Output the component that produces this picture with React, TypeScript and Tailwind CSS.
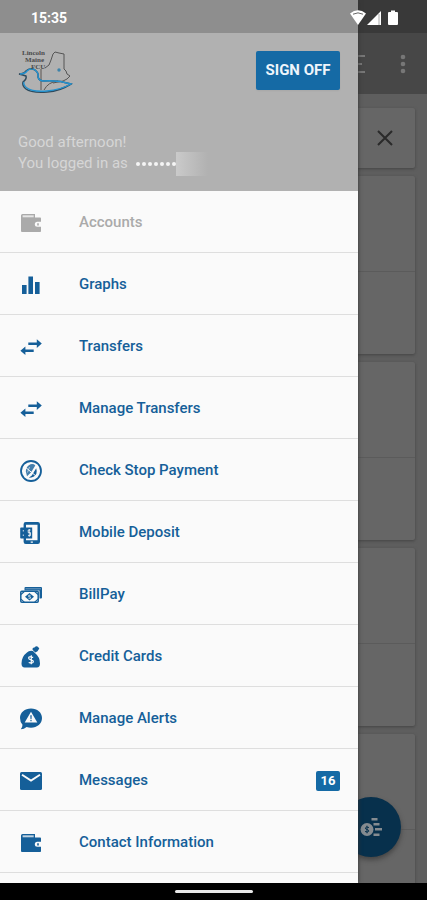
import { ReactNode } from 'react';
import clsx from 'clsx';

function Icon({ children }: { children: ReactNode }) {
  return (
    <svg viewBox="0 0 24 24" className="size-6 shrink-0" fill="currentColor" aria-hidden="true">
      {children}
    </svg>
  );
}

const WalletIcon = () => (
  <Icon>
    <path d="M2 4.5Q2 3 3.5 3H16v3.6h5.2q.8 0 .8.9v3.3h-3.700a2.500 2.500 0 0 0 0 5H22v4.400q0 .8-.9.8H3q-1 0-1-1z" />
    <path d="M3.600 4.300h11.100v2H3.600z" fill="#fafafa" opacity=".75" />
    <path d="M18.200 12.200h1.600v2.200h-1.600z" />
  </Icon>
);

const GraphIcon = () => (
  <Icon>
    <path d="M3 12h4.6v9H3zM9.400 3.500H14V21H9.400zM16 9h4.600v12H16z" />
  </Icon>
);

const TransferIcon = () => (
  <Icon>
    <path d="M9.300 7.500h8.500V4.300l5 4.300-5 4.300V9.900H9.300zM14.700 14.500v2.400H6.400V20l-5-4.300 5-4.300v3.100z" />
  </Icon>
);

const StopPaymentIcon = () => (
  <Icon>
    <circle cx="12" cy="12" r="10" fill="none" stroke="currentColor" strokeWidth="1.800" />
    <path d="M11.500 5.200q3.400-.6 4.800 1.200L12 13.400l-4 3.800-1.200-5q.2-5 4.700-7z" opacity=".8" />
    <path d="m17.200 9.200-4.400 7.400-3 2.200q5.600 0 7.600-4 .8-2.600-.2-5.600z" />
    <path d="m5.500 7.500 12 10" stroke="#fafafa" strokeWidth="1" />
    <path d="m10.500 8-2 5.500" stroke="#fafafa" strokeWidth=".6" />
  </Icon>
);

const MobileDepositIcon = () => (
  <Icon>
    <path
      fillRule="evenodd"
      d="M6.800 1h12q2.200 0 2.200 2.200v17.600q0 2.200-2.200 2.200h-12q-2.200 0-2.200-2.200v-3.300H2q-.8 0-.8-.8V7.300q0-.8.8-.8h2.600V3.200Q4.600 1 6.800 1zM7 3.800v2.700h6.200v11H7v1.700h11.500V3.800zm4.700 16.700v1.200h2.200v-1.200z"
    />
    <path d="M11.500 9H9.200v2.600h2.300v3H9M10.300 8v7.800M4.300 9v1.500M4.300 13.500V15" fill="none" stroke="#fafafa" strokeWidth=".8" />
  </Icon>
);

const BillPayIcon = () => (
  <Icon>
    <path d="M5.500 7.500V5q0-1 1-1H22q1 0 1 1v9.500q0 1-1 1h-1.500V7.500z" />
    <path d="M6.500 5.800H22" stroke="#fafafa" strokeWidth=".4" />
    <rect x="1.800" y="8.300" width="17.400" height="11" rx="1" fill="#fafafa" stroke="currentColor" strokeWidth="1.500" />
    <path d="M2 11.500 5.300 8.500M15.700 8.500l3.300 3M2 16.200l3.300 3M15.700 19.200l3.300-3" stroke="currentColor" strokeWidth="1.100" />
    <path d="m10.500 10 4.500 3.800-4.500 3.800L6 13.800z" />
    <path d="M11.600 12.300H9.700v1.500h1.700v1.500H9.500" fill="none" stroke="#fafafa" strokeWidth=".7" />
  </Icon>
);

const MoneyBagIcon = () => (
  <Icon>
    <path d="M8 7.500Q10 5.300 14 6l2.200 2.200Q21 12 21 18.500q0 4-3.200 4H5.700q-3.200 0-3.200-4Q2.500 11.500 8 7.500z" />
    <path d="M13.500 4.800q-.3-2.500 2-2.300 1.800-2 3.600-.6l1.200 1.700-1.800 2.700-2.200 1.200z" />
    <path
      d="M14.200 12.300q-4.700-1.300-4.600.8 0 1.300 2.400 1.700 2.500.6 2.300 2-.4 2-4.600.7M12.300 10.300v9"
      fill="none"
      stroke="#fafafa"
      strokeWidth="1.200"
    />
  </Icon>
);

const AlertIcon = () => (
  <Icon>
    <path d="M12 1.500c6.200 0 11 4 11 9.600s-4.800 9.700-11 9.700q-2.400 0-4.400-.7Q5 22.300 1.800 22.300q1.700-2 1.700-4.500Q1 15 1 11.100C1 5.500 5.800 1.500 12 1.500z" />
    <path d="m12 4.700 6.300 10.900H5.700z" fill="#fafafa" />
    <path d="M11.300 8.300h1.400l-.2 4h-1zM11.400 13.100h1.200v1.200h-1.200z" />
  </Icon>
);

const MailIcon = () => (
  <Icon>
    <path d="M2.500 3h19Q23 3 23 4.500v15q0 1.500-1.500 1.500h-19Q1 21 1 19.500v-15Q1 3 2.500 3z" />
    <path d="m3 5.700 9 5.800 9-5.800" fill="none" stroke="#fafafa" strokeWidth="1.900" />
  </Icon>
);

const menuItems = [
  { name: 'Accounts', icon: WalletIcon, current: true },
  { name: 'Graphs', icon: GraphIcon },
  { name: 'Transfers', icon: TransferIcon },
  { name: 'Manage Transfers', icon: TransferIcon },
  { name: 'Check Stop Payment', icon: StopPaymentIcon },
  { name: 'Mobile Deposit', icon: MobileDepositIcon },
  { name: 'BillPay', icon: BillPayIcon },
  { name: 'Credit Cards', icon: MoneyBagIcon },
  { name: 'Manage Alerts', icon: AlertIcon },
  { name: 'Messages', icon: MailIcon, count: 16 },
  { name: 'Contact Information', icon: WalletIcon },
];

function Logo() {
  return (
    <svg viewBox="0 0 56 48" className="h-12 w-14" fill="none" role="img" aria-label="Lincoln Maine FCU">
      <path
        d="m27 20 4-3 2-5 2-6 2-2 4 1 5 1v15l2 2 1 3 3 2-3 3-4 2-5 1-5 1"
        stroke="#555"
        strokeWidth="1"
      />
      <path d="M23 21v21M26 42q4-8 14-9" stroke="#5a5550" strokeWidth="1" />
      <path
        d="M1 26q5 0 7-3 4-4 9-1 4 3 3 7 1 4 6 4 14-1 27 3Q42 43 29 44q-16 1-21-3-4-3-3-7 4-3 3-6-3-1-7-2z"
        stroke="#2f4a5c"
        strokeWidth="1.500"
      />
      <path
        d="M2 26q5 0 7-3 4-4 8-1 4 3 3 7 1 4 6 4 14-1 27 3Q42 42 29 43q-15 1-20-3-4-3-3-6"
        stroke="#2492cf"
        strokeWidth="1.400"
      />
      <circle cx="41" cy="22" r="1.700" fill="#3e83aa" />
      <g fill="#4a4a4a" fontFamily="Liberation Serif, serif" fontSize="7" fontWeight="700">
        <text x="4" y="7">Lincoln</text>
        <text x="7" y="14">Maine</text>
        <text x="13" y="21">FCU</text>
      </g>
    </svg>
  );
}

function StatusIcons() {
  return (
    <svg viewBox="0 0 48 16" className="h-4 w-12" fill="#fff" aria-hidden="true">
      <path d="M0 3.500Q8-3 16 3.500L8 15z" />
      <path d="M3 4.200Q8 1.500 13 4.200" fill="none" stroke="#666" strokeWidth="1" />
      <path d="M17 15 31 1v14z" />
      <path d="M29 4v11" stroke="#aaa" strokeWidth="1" />
      <path d="M39 2h2V.5h4V2h2q1 0 1 1v11q0 1-1 1h-8q-1 0-1-1V3q0-1 1-1z" />
    </svg>
  );
}

function AccountCard() {
  return (
    <section className="shrink-0 rounded-xs bg-[#666] shadow-[0_1px_3px_#444]">
      <div className="h-24 border-b border-[#5b5b5b]" />
      <div className="h-[82px]" />
    </section>
  );
}

function AccountsPage() {
  return (
    <div className="flex h-full flex-col bg-[#5e5e5e]">
      <header className="flex h-[94px] shrink-0 items-center justify-end gap-8 bg-[#474747] pt-[34px] pr-[21px] text-[#777]">
        <button aria-label="Sort accounts">
          <svg viewBox="0 0 20 20" className="size-5" stroke="currentColor" strokeWidth="2">
            <path d="M4 2h13M2 10h12M4 18h13" />
          </svg>
        </button>
        <button aria-label="More options">
          <svg viewBox="0 0 6 20" className="h-5 w-[6px]" fill="currentColor">
            <circle cx="3" cy="3" r="2.300" />
            <circle cx="3" cy="10" r="2.300" />
            <circle cx="3" cy="17" r="2.300" />
          </svg>
        </button>
      </header>
      <main className="flex flex-col gap-2 px-3 pt-[14px]">
        <section className="flex h-[60px] shrink-0 items-center justify-end rounded-xs bg-[#666] pr-[22px] shadow-[0_1px_3px_#444]">
          <button aria-label="Dismiss">
            <svg viewBox="0 0 16 16" className="size-4" stroke="#2a2a2a" strokeWidth="2">
              <path d="m1 1 14 14M15 1 1 15" />
            </svg>
          </button>
        </section>
        <AccountCard />
        <AccountCard />
        <AccountCard />
        <AccountCard />
      </main>
      <button
        aria-label="Quick pay"
        className="absolute right-[26px] bottom-[26px] flex size-[60px] items-center justify-center rounded-full bg-[#07304c] shadow-[0_3px_5px_#444]"
      >
        <svg viewBox="0 0 24 24" className="size-6" fill="#858b90" aria-hidden="true">
          <circle cx="8" cy="14.500" r="6.500" />
          <path d="M12.500 3h6v2.500h-6zM14.500 8h6v2.500h-6zM16 13h7v2.500h-7zM14.500 18.500h6V21h-6z" />
          <path d="M10 12.500q-3.500-1.200-3.700.5 0 1 1.700 1.500 2 .5 1.800 1.700-.3 1.500-3.800.3M8 10.700v7.600" fill="none" stroke="#07304c" strokeWidth="1" />
        </svg>
      </button>
    </div>
  );
}

function Drawer() {
  return (
    <aside className="absolute inset-y-0 left-0 flex w-[calc(100%-69px)] flex-col overflow-hidden bg-[#fafafa] shadow-[0_0_4px_#333]">
      <header className="flex h-[191px] shrink-0 flex-col justify-between border-t-[33px] border-[#8e8e8e] bg-[#b1b1b1] px-[18px] pt-[15px] pb-[17px]">
        <div className="flex items-start justify-between">
          <Logo />
          <button className="mt-[3px] h-[39px] w-[84px] rounded-xs bg-[#156aa5] text-[15px] font-bold whitespace-nowrap text-[#eef5fb] shadow-xs">
            SIGN OFF
          </button>
        </div>
        <div className="text-[15px] leading-[21px] text-[#d6d6d6]">
          <p>Good afternoon!</p>
          <p className="flex items-center">
            You logged in as
            <span className="ml-2 flex gap-[2px]" aria-label="hidden user name">
              {Array.from({ length: 7 }, (_, i) => (
                <i key={i} className="size-[4px] rounded-full bg-[#f5f5f5]" />
              ))}
            </span>
            <span className="-my-1 h-6 w-8 bg-linear-to-r from-[#cacaca] to-[#b1b1b1]" />
          </p>
        </div>
      </header>
      <nav>
        {menuItems.map((item) => {
          const ItemIcon = item.icon;
          return (
            <a
              key={item.name}
              href="#"
              className={clsx(
                'flex h-[62px] items-center gap-9 border-b border-[#dedede] pt-[2px] pr-[18px] pl-[19px] text-[15px] font-medium',
                item.current ? 'text-[#aaa]' : 'text-[#155f99]',
              )}
            >
              <ItemIcon />
              <span className="flex-1">{item.name}</span>
              {item.count && (
                <span className="flex h-5 w-6 items-center justify-center rounded-xs bg-[#156aa5] text-[13px] font-bold text-white">
                  {item.count}
                </span>
              )}
            </a>
          );
        })}
      </nav>
    </aside>
  );
}

export default function App() {
  return (
    <div className="flex h-screen flex-col overflow-hidden bg-black font-[Roboto,sans-serif]">
      <div className="relative min-h-0 flex-1 overflow-hidden">
        <AccountsPage />
        <div className="absolute inset-x-0 top-0 h-[33px] bg-[#393939]" />
        <Drawer />
        <div className="absolute inset-x-0 top-0 flex h-[33px] items-center justify-between pt-[2px] pr-[29px] pl-[31px] text-sm font-bold text-white">
          <time>15:35</time>
          <StatusIcons />
        </div>
      </div>
      <footer className="flex h-[17px] shrink-0 items-center justify-center">
        <div className="h-[3px] w-[78px] rounded-full bg-[#e8e8e8]" />
      </footer>
    </div>
  );
}
